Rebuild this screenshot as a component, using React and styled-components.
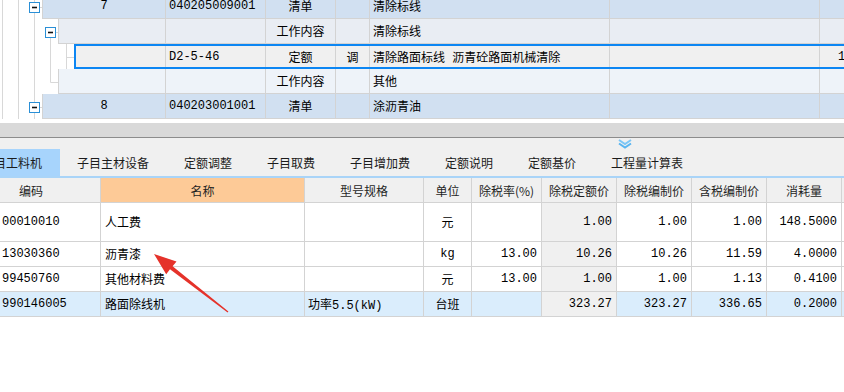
import styled, { createGlobalStyle, css } from "styled-components";

const GlobalStyle = createGlobalStyle`
  html, body { margin: 0; padding: 0; background: #fff; }
  #root { width: 844px; height: 392px; }
`;

const GRID_FONT = `"Liberation Mono", "Noto Sans CJK SC", monospace`;
const UI_FONT = `"Noto Sans CJK SC", "Noto Sans", sans-serif`;
const LINE = "#d3d3d3";
const TREE_LINE = "#d8d8d8";

const Page = styled.div`
  position: relative;
  width: 844px;
  height: 392px;
  overflow: hidden;
  background: #fff;
  color: #000;
`;

/* ---------- upper tree grid ---------- */

const TreePane = styled.div`
  height: 123px;
  overflow: hidden;
`;

const TreeScroll = styled.div`
  margin-top: -6px;
`;

const TreeRow = styled.div`
  display: flex;
  height: 25px;
`;

const Gutter = styled.svg`
  flex: none;
  display: block;
`;

const RowBody = styled.div`
  flex: 1;
  display: flex;
  min-width: 0;
  box-sizing: border-box;
  background: ${(p) => p.$bg};
  border-left: 1px solid ${LINE};
  border-bottom: 1px solid ${LINE};
  ${(p) =>
    p.$selected &&
    css`
      border: 2px solid #0c86f3;
      border-right: none;
    `}
`;

const TreeCell = styled.div`
  flex: none;
  width: ${(p) => p.$w}px;
  box-sizing: border-box;
  border-right: 1px solid ${LINE};
  display: flex;
  align-items: center;
  justify-content: ${(p) => (p.$align === "center" ? "center" : "flex-start")};
  padding-left: ${(p) => p.$pad || 0}px;
  font: 12px ${GRID_FONT};
  white-space: nowrap;
  overflow: hidden;
`;

/* ---------- splitter + tabs ---------- */

const Splitter = styled.div`
  height: 14px;
  background: #d9d9d9;
  border-bottom: 1px solid #8c8c8c;
`;

const TabBar = styled.div`
  position: relative;
  height: 38px;
  background: #f0f0f0;
  border-bottom: 2px solid #a9d4f8;
  display: flex;
  align-items: flex-end;
`;

const Tab = styled.div`
  flex: none;
  height: 27px;
  padding: 0 17.5px;
  display: flex;
  align-items: center;
  font: 12px ${UI_FONT};
  color: #1b1b1b;
  white-space: nowrap;
  background: ${(p) => (p.$active ? "#a7d4fc" : "transparent")};
  &:first-child {
    margin-left: -35.5px;
  }
`;

const Handle = styled.svg`
  position: absolute;
  top: 1px;
  left: 618px;
`;

/* ---------- lower table ---------- */

const HeadRow = styled.div`
  display: flex;
  height: 25px;
  box-sizing: border-box;
  background: #f0f0f0;
  border-bottom: 1px solid ${LINE};
`;

const HeadCell = styled.div`
  flex: none;
  width: ${(p) => p.$w}px;
  box-sizing: border-box;
  border-right: 1px solid ${LINE};
  background: ${(p) => (p.$hot ? "#fdca97" : "transparent")};
  display: flex;
  align-items: center;
  justify-content: center;
  padding-right: ${(p) => p.$shift || 0}px;
  font: 12px ${UI_FONT};
  color: #1f1f1f;
  white-space: nowrap;
`;

const DataRow = styled.div`
  display: flex;
  height: ${(p) => p.$h}px;
  box-sizing: border-box;
  border-bottom: 1px solid ${LINE};
  background: ${(p) => (p.$selected ? "#daedfc" : "#fff")};
`;

const DataCell = styled.div`
  flex: none;
  width: ${(p) => p.$w}px;
  box-sizing: border-box;
  border-right: 1px solid ${LINE};
  display: flex;
  align-items: center;
  justify-content: ${(p) =>
    p.$align === "right" ? "flex-end" : p.$align === "center" ? "center" : "flex-start"};
  padding: 0 ${(p) => (p.$align === "right" ? 4 : 0)}px 0 ${(p) => p.$pad || 0}px;
  background: ${(p) => (p.$shade ? "#f0f0f0" : "transparent")};
  font: 12px ${GRID_FONT};
  white-space: nowrap;
  overflow: hidden;
`;

const Arrow = styled.svg`
  position: absolute;
  left: 0;
  top: 0;
  pointer-events: none;
`;

/* ---------- data ---------- */

const treeCols = [
  { w: 100, align: "left", pad: 3 },
  { w: 70, align: "center" },
  { w: 34, align: "center" },
  { w: 240, align: "left", pad: 3 },
  { w: 210, align: "left", pad: 3 },
  { w: 80, align: "left", pad: 18 },
];

const treeRows = [
  {
    indent: 42,
    bg: "#d1e0f1",
    full: [2.5, 18.5, 34.5],
    box: 29.5,
    cells: ["7", "040205009001", "清单", "", "清除标线", "", ""],
  },
  {
    indent: 58,
    bg: "#e9edf3",
    full: [2.5, 18.5, 34.5],
    box: 45.5,
    down: 50.5,
    cells: ["", "", "工作内容", "", "清除标线", "", ""],
  },
  {
    indent: 74,
    bg: "#f0f0f0",
    selected: true,
    full: [2.5, 18.5, 34.5, 50.5, 66.5],
    branch: 66.5,
    cells: ["", "D2-5-46", "定额", "调", "清除路面标线 沥青砼路面机械清除", "", "1"],
  },
  {
    indent: 58,
    bg: "#eef3f9",
    full: [2.5, 18.5, 34.5],
    up: 50.5,
    branch: 50.5,
    cells: ["", "", "工作内容", "", "其他", "", ""],
  },
  {
    indent: 42,
    bg: "#d1e0f1",
    full: [2.5, 18.5, 34.5],
    box: 29.5,
    cells: ["8", "040203001001", "清单", "", "涂沥青油", "", ""],
  },
];

const tabs = [
  "子目工料机",
  "子目主材设备",
  "定额调整",
  "子目取费",
  "子目增加费",
  "定额说明",
  "定额基价",
  "工程量计算表",
];

const columns = [
  { title: "编码", w: 101, align: "left", pad: 2, shift: 38 },
  { title: "名称", w: 204, align: "left", pad: 4, hot: true },
  { title: "型号规格", w: 119, align: "left", pad: 3 },
  { title: "单位", w: 48, align: "center" },
  { title: "除税率(%)", w: 70, align: "right" },
  { title: "除税定额价", w: 75, align: "right", shade: true },
  { title: "除税编制价", w: 75, align: "right" },
  { title: "含税编制价", w: 75, align: "right" },
  { title: "消耗量", w: 75, align: "right" },
  { title: "", w: 40, align: "left" },
];

const items = [
  { h: 39, cells: ["00010010", "人工费", "", "元", "", "1.00", "1.00", "1.00", "148.5000", ""] },
  { h: 25, cells: ["13030360", "沥青漆", "", "kg", "13.00", "10.26", "10.26", "11.59", "4.0000", ""] },
  { h: 25, cells: ["99450760", "其他材料费", "", "元", "13.00", "1.00", "1.00", "1.13", "0.4100", ""] },
  {
    h: 25,
    selected: true,
    cells: ["990146005", "路面除线机", "功率5.5(kW)", "台班", "", "323.27", "323.27", "336.65", "0.2000", ""],
  },
];

/* ---------- parts ---------- */

const TreeLines = ({ row }) => (
  <Gutter width={row.indent} height={25}>
    {row.full.map((x) => (
      <line key={x} x1={x} y1={0} x2={x} y2={25} stroke={TREE_LINE} />
    ))}
    {row.down && <line x1={row.down} y1={18} x2={row.down} y2={25} stroke={TREE_LINE} />}
    {row.up && <line x1={row.up} y1={0} x2={row.up} y2={13.5} stroke={TREE_LINE} />}
    {row.branch && (
      <line x1={row.branch} y1={13.5} x2={row.indent} y2={13.5} stroke={TREE_LINE} />
    )}
    {row.box && (
      <g>
        <line x1={row.box + 10} y1={13.5} x2={row.indent} y2={13.5} stroke={TREE_LINE} />
        <rect x={row.box} y={8.5} width={10} height={10} fill="#fff" stroke="#2a8fd6" />
        <line x1={row.box + 2.5} y1={13.5} x2={row.box + 7.5} y2={13.5} stroke="#111" strokeWidth={1.6} />
      </g>
    )}
  </Gutter>
);

const TreeGridRow = ({ row }) => {
  const firstW = 166 - row.indent - (row.selected ? 2 : 1);
  const cols = [{ w: firstW, align: "center" }, ...treeCols];
  return (
    <TreeRow>
      <TreeLines row={row} />
      <RowBody $bg={row.bg} $selected={row.selected}>
        {cols.map((c, i) => (
          <TreeCell key={i} $w={c.w} $align={c.align} $pad={c.pad}>
            {row.cells[i]}
          </TreeCell>
        ))}
      </RowBody>
    </TreeRow>
  );
};

export default function App() {
  return (
    <>
      <GlobalStyle />
      <Page>
        <TreePane>
          <TreeScroll>
            {treeRows.map((r, i) => (
              <TreeGridRow key={i} row={r} />
            ))}
          </TreeScroll>
        </TreePane>

        <Splitter />

        <TabBar>
          {tabs.map((t, i) => (
            <Tab key={t} $active={i === 0}>
              {t}
            </Tab>
          ))}
          <Handle width={14} height={10} viewBox="0 0 14 10">
            <polyline points="1,1 7,5 13,1" fill="none" stroke="#7cc6f6" strokeWidth={2} />
            <polyline points="1,4.5 7,8.5 13,4.5" fill="none" stroke="#5ab5f0" strokeWidth={2} />
          </Handle>
        </TabBar>

        <HeadRow>
          {columns.map((c, i) => (
            <HeadCell key={i} $w={c.w} $hot={c.hot} $shift={c.shift}>
              {c.title}
            </HeadCell>
          ))}
        </HeadRow>
        {items.map((it, r) => (
          <DataRow key={r} $h={it.h} $selected={it.selected}>
            {columns.map((c, i) => (
              <DataCell key={i} $w={c.w} $align={c.align} $pad={c.pad} $shade={c.shade}>
                {it.cells[i]}
              </DataCell>
            ))}
          </DataRow>
        ))}

        <Arrow width={844} height={392}>
          <polygon
            points="154,254 176.5,261.5 172.6,266.2 228.4,311.6 227.6,312.4 170.0,269.2 166.2,274.2"
            fill="#e5322a"
          />
        </Arrow>
      </Page>
    </>
  );
}
